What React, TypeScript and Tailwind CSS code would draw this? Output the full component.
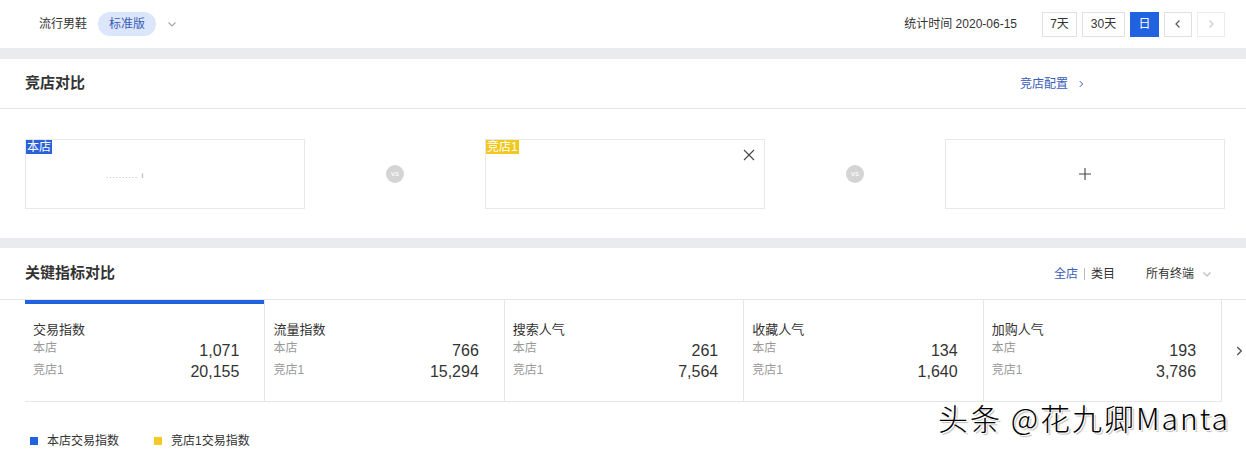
import React from 'react';

const metrics = [
    { title: '交易指数', own: '1,071', rival: '20,155', active: true },
    { title: '流量指数', own: '766', rival: '15,294' },
    { title: '搜索人气', own: '261', rival: '7,564' },
    { title: '收藏人气', own: '134', rival: '1,640' },
    { title: '加购人气', own: '193', rival: '3,786' },
];

function Chevron({ className = '' }: { className?: string }) {
    return (
        <svg viewBox="0 0 12 12" className={className} fill="none" stroke="currentColor" strokeWidth="1.2">
            <path d="M2.5 4.5 6 8l3.5-3.5" />
        </svg>
    );
}

function Vs() {
    return (
        <div className="flex size-[18px] items-center justify-center rounded-full bg-[#d4d4d4] text-[8px] leading-none text-white">
            vs
        </div>
    );
}

export default function App() {
    return (
        <div className="h-[458px] w-[1246px] overflow-hidden bg-[#e9ebef] font-['Liberation_Sans','Noto_Sans_CJK_SC',sans-serif] text-[#333]">
            {/* top bar */}
            <div className="flex h-[48px] items-center bg-white pr-[21px] pl-[39px] text-[12px]">
                <span className="text-[#333]">流行男鞋</span>
                <span className="ml-[11px] rounded-full bg-[#dce6fa] px-[11px] py-[3px] text-[#3a5cb8]">标准版</span>
                <Chevron className="ml-[10px] size-[12px] text-[#aaa]" />
                <div className="ml-auto flex items-center">
                    <span className="mr-[25px] text-[#333]">统计时间 2020-06-15</span>
                    <div className="flex gap-[5px]">
                        <button className="h-[25px] w-[35px] border border-[#e0e0e0] text-[#333]">7天</button>
                        <button className="h-[25px] w-[43px] border border-[#e0e0e0] text-[#333]">30天</button>
                        <button className="h-[25px] w-[29px] bg-[#2062e0] text-white">日</button>
                        <button className="flex h-[25px] w-[28px] items-center justify-center border border-[#e0e0e0] text-[#555]">
                            <Chevron className="size-[12px] rotate-90" />
                        </button>
                        <button className="flex h-[25px] w-[28px] items-center justify-center border border-[#ececec] text-[#ccc]">
                            <Chevron className="size-[12px] -rotate-90" />
                        </button>
                    </div>
                </div>
            </div>

            {/* competitor compare */}
            <div className="mt-[11px] bg-white">
                <div className="flex h-[50px] items-center border-b border-[#e6e6e6] px-[25px]">
                    <h2 className="text-[15px] font-bold text-[#333]">竞店对比</h2>
                    <a className="mr-[135px] ml-auto flex items-center gap-[8px] text-[12px] text-[#3a5cb8]">
                        竞店配置
                        <Chevron className="size-[10px] -rotate-90 text-[#3a5cb8]" />
                    </a>
                </div>
                <div className="flex items-center justify-between pt-[30px] pr-[21px] pb-[29px] pl-[25px]">
                    <div className="relative h-[70px] w-[280px] border border-[#e8e8e8]">
                        <span className="absolute top-0 left-0 bg-[#2b62d9] px-[1px] text-[12px] leading-[14px] text-white">本店</span>
                        <span className="absolute top-[32px] left-[80px] text-[8px] leading-none tracking-[1px] text-[#999]">.......... i</span>
                    </div>
                    <Vs />
                    <div className="relative h-[70px] w-[280px] border border-[#e8e8e8]">
                        <span className="absolute top-0 left-0 bg-[#f2c81e] px-[1px] text-[12px] leading-[14px] text-white">竞店1</span>
                        <svg viewBox="0 0 12 12" className="absolute top-[9px] right-[9px] size-[12px]" stroke="#444" strokeWidth="1.1">
                            <path d="M1 1l10 10M11 1 1 11" />
                        </svg>
                    </div>
                    <Vs />
                    <div className="flex h-[70px] w-[280px] items-center justify-center border border-[#e8e8e8]">
                        <svg viewBox="0 0 12 12" className="size-[12px]" stroke="#444" strokeWidth="1.1">
                            <path d="M6 0v12M0 6h12" />
                        </svg>
                    </div>
                </div>
            </div>

            {/* key metrics */}
            <div className="mt-[10px] h-[220px] bg-white">
                <div className="flex h-[52px] items-center border-b border-[#e6e6e6] px-[25px]">
                    <h2 className="text-[15px] font-bold text-[#333]">关键指标对比</h2>
                    <div className="ml-auto flex items-center text-[12px]">
                        <span className="text-[#3a5cb8]">全店</span>
                        <span className="mx-[6px] h-[12px] w-px bg-[#bbb]" />
                        <span className="text-[#333]">类目</span>
                        <span className="ml-[31px] text-[#333]">所有终端</span>
                        <Chevron className="ml-[7px] size-[12px] text-[#bbb]" />
                    </div>
                    <div className="w-[8px]" />
                </div>
                <div className="flex items-center">
                    <div className="ml-[25px] grid h-[102px] w-[1200px] grid-cols-5 border-b border-[#e6e6e6]">
                        {metrics.map((m, i) => (
                            <div
                                key={m.title}
                                className={`relative px-[8px] pt-[21px] text-[12px] ${i > 0 ? 'border-l border-[#e6e6e6]' : ''} ${i === 4 ? 'border-r border-[#e6e6e6]' : ''}`}
                            >
                                {m.active && <div className="absolute top-0 right-0 left-0 h-[4px] bg-[#2062e0]" />}
                                <div className="text-[13px] leading-[18px] text-[#333]">{m.title}</div>
                                <div className="flex items-start justify-between pr-[17px]">
                                    <span className="leading-[18px] text-[#999]">本店</span>
                                    <span className="mt-[2px] text-[16px] leading-[20px] text-[#333]">{m.own}</span>
                                </div>
                                <div className="flex items-start justify-between pr-[17px]">
                                    <span className="leading-[18px] text-[#999]">竞店1</span>
                                    <span className="mt-[1px] text-[16px] leading-[20px] text-[#333]">{m.rival}</span>
                                </div>
                            </div>
                        ))}
                    </div>
                    <Chevron className="ml-[10px] size-[14px] -rotate-90 text-[#555]" />
                </div>
                <div className="relative flex items-center px-[30px] pt-[30px] text-[12px] text-[#333]">
                    <span className="size-[8px] bg-[#2062e0]" />
                    <span className="ml-[9px]">本店交易指数</span>
                    <span className="ml-[35px] size-[8px] bg-[#f4c928]" />
                    <span className="ml-[9px]">竞店1交易指数</span>
                    <span className="absolute top-0 right-[16px] font-['Noto_Sans_CJK_SC',sans-serif] text-[30px] leading-none font-light tracking-[2px] text-black [text-shadow:1px_1px_0_#fff,-1px_-1px_0_#fff,2px_2px_1px_#bbb]">
                        头条 @花九卿Manta
                    </span>
                </div>
            </div>
        </div>
    );
}
